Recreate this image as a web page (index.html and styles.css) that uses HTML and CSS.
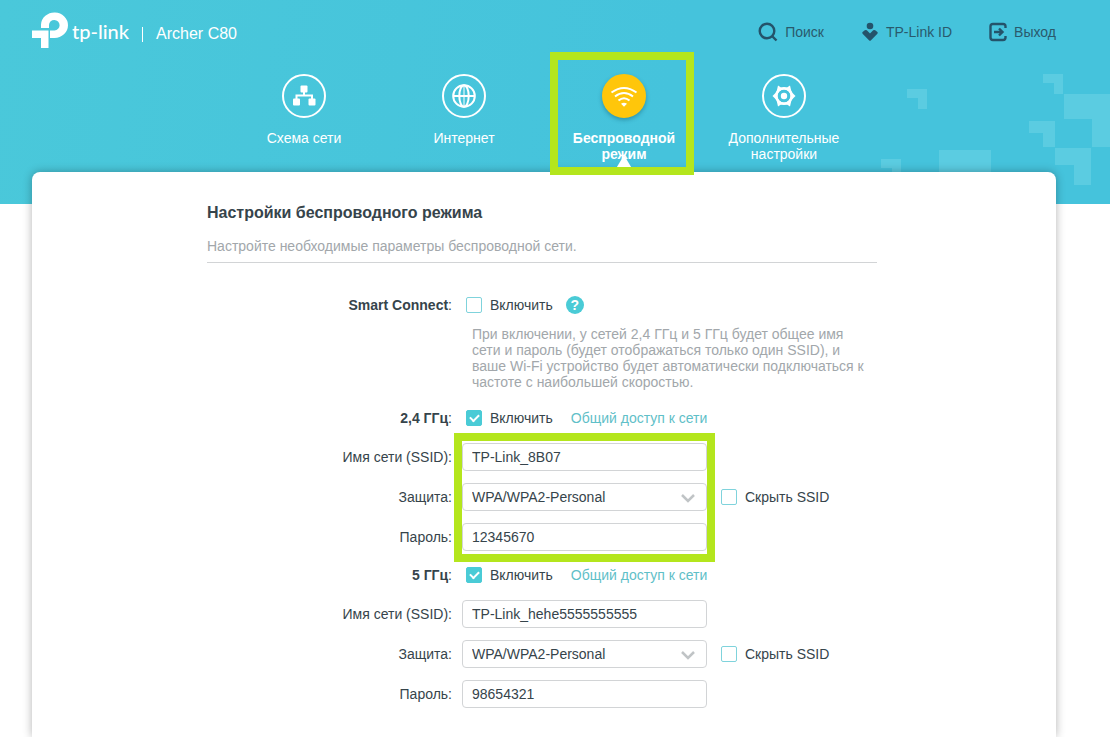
FILE: index.html
```html
<!DOCTYPE html>
<html lang="ru">
<head>
<meta charset="utf-8">
<title>Archer C80</title>
<link rel="stylesheet" href="styles.css">
</head>
<body>
<header class="header">
  <svg class="header-pattern" width="230" height="132" viewBox="0 0 230 132" aria-hidden="true">
    <path d="M27 17h20v20h-9v-11h-11zM163 2h20v20h-9v-11h-11zM184 22h46v53h-18v-28h-28zM149 49h26v26h-12v-14h-14zM175 76h36v37h-17v-20h-19zM59 78h52v54h-52zM1 87h20v20h-9v-11h-11z"/>
  </svg>
  <div class="topbar">
    <div class="brand">
      <svg class="brand-mark" width="36" height="36" viewBox="0 0 36 36" aria-hidden="true">
        <path d="M9 16V12.500A13.500 12.800 0 1 1 22.500 26H18V18.500H22.500A5.300 5.300 0 1 0 17 13V16z"/>
        <path d="M0 18.500h16.500V36H9V26H0z"/>
      </svg>
      <span class="brand-name">tp-link</span>
      <span class="brand-divider"></span>
      <span class="brand-model">Archer C80</span>
    </div>
    <div class="actions">
      <button class="action" type="button">
        <svg width="20" height="20" viewBox="0 0 20 20" aria-hidden="true"><circle cx="9" cy="9" r="7.300" class="line"/><path d="M14 14l4.500 4.500" class="line"/></svg>
        Поиск
      </button>
      <button class="action" type="button">
        <svg width="18" height="20" viewBox="0 0 18 20" aria-hidden="true"><circle cx="9" cy="4" r="3.300"/><path d="M9 11.600l3.200-3.300q1-.8 2 0l2.200 1.700q.8.900 0 1.700L10 18.300q-1 1-2 0L1.600 11.700q-.8-.8 0-1.700L3.800 8.300q1-.8 2 0z"/></svg>
        TP-Link ID
      </button>
      <button class="action" type="button">
        <svg width="18" height="20" viewBox="0 0 18 20" aria-hidden="true"><path d="M16.500 6V4.500q0-2.500-2.500-2.500H4Q1.500 2 1.500 4.500v11Q1.500 18 4 18h10q2.500 0 2.500-2.500V14M5 10h8M10 6.500l3.500 3.500-3.500 3.500" class="line"/></svg>
        Выход
      </button>
    </div>
  </div>
  <nav class="nav">
    <a class="nav-item" href="#map">
      <span class="nav-icon"><svg width="24" height="24" viewBox="0 0 24 24" aria-hidden="true"><rect x="8.500" y="1.500" width="7" height="7" rx="1"/><rect x="1" y="14.500" width="7" height="7" rx="1"/><rect x="16.500" y="14.500" width="7" height="7" rx="1"/><path d="M12 8v4M4.500 15.500v-4h15.500v4" class="line"/></svg></span>
      Схема сети
    </a>
    <a class="nav-item" href="#internet">
      <span class="nav-icon"><svg width="24" height="24" viewBox="0 0 24 24" aria-hidden="true"><g class="line"><circle cx="12" cy="12" r="10.800"/><ellipse cx="12" cy="12" rx="4.700" ry="10.800"/><path d="M1 12h22"/><path d="M12 1v22" class="thin"/></g></svg></span>
      Интернет
    </a>
    <a class="nav-item nav-item-active" href="#wireless">
      <span class="nav-icon"><svg width="28" height="24" viewBox="0 0 28 24" aria-hidden="true"><path d="M1.500 8.500q12.500-9 25 0M5 12.500q9-7 18 0M8.500 16.500q5.500-4.500 11 0" class="line"/><path d="M11 19.800q3-2.200 6 0l-3 3z"/></svg></span>
      Беспроводной режим
    </a>
    <a class="nav-item" href="#advanced">
      <span class="nav-icon"><svg width="24" height="24" viewBox="0 0 24 24" aria-hidden="true"><circle cx="12" cy="12" r="7.800" class="line thick"/><circle cx="12" cy="12" r="3.200"/><path d="M6 1.500l3 2h6l3-2 1.500 6.500 4 4-4 4-1.500 6.500-3-2H9l-3 2L4.500 16l-4-4 4-4zM12 5.500a6.500 6.500 0 1 0 0 13 6.500 6.500 0 1 0 0-13z" fill-rule="evenodd"/></svg></span>
      Дополнительные настройки
    </a>
  </nav>
</header>
<main class="panel">
  <form class="settings">
    <h1 class="title">Настройки беспроводного режима</h1>
    <p class="subtitle">Настройте необходимые параметры беспроводной сети.</p>

    <div class="row toggle-row">
      <span class="label"><b>Smart Connect</b>:</span>
      <div class="toggle">
        <label class="check"><input type="checkbox">Включить</label>
        <button class="help" type="button" aria-label="Справка">?</button>
      </div>
    </div>
    <p class="hint">При включении, у сетей 2,4 ГГц и 5 ГГц будет общее имя сети и пароль (будет отображаться только один SSID), и ваше Wi-Fi устройство будет автоматически подключаться к частоте с наибольшей скоростью.</p>

    <div class="band">
      <div class="row toggle-row">
        <span class="label"><b>2,4 ГГц</b>:</span>
        <div class="toggle">
          <label class="check"><input type="checkbox" checked>Включить</label>
          <a class="share" href="#share24">Общий доступ к сети</a>
        </div>
      </div>
      <div class="fields fields-marked">
        <div class="row">
          <label class="label" for="ssid24">Имя сети (SSID):</label>
          <input class="control" id="ssid24" type="text" value="TP-Link_8B07">
        </div>
        <div class="row">
          <label class="label" for="sec24">Защита:</label>
          <div class="select">
            <select class="control" id="sec24"><option>WPA/WPA2-Personal</option></select>
            <svg class="chevron" width="14" height="9" viewBox="0 0 14 9" aria-hidden="true"><path d="M1 1l6 6 6-6"/></svg>
          </div>
          <label class="check"><input type="checkbox">Скрыть SSID</label>
        </div>
        <div class="row">
          <label class="label" for="pass24">Пароль:</label>
          <input class="control" id="pass24" type="text" value="12345670">
        </div>
      </div>
    </div>

    <div class="band">
      <div class="row toggle-row">
        <span class="label"><b>5 ГГц</b>:</span>
        <div class="toggle">
          <label class="check"><input type="checkbox" checked>Включить</label>
          <a class="share" href="#share5">Общий доступ к сети</a>
        </div>
      </div>
      <div class="fields">
        <div class="row">
          <label class="label" for="ssid5">Имя сети (SSID):</label>
          <input class="control" id="ssid5" type="text" value="TP-Link_hehe5555555555">
        </div>
        <div class="row">
          <label class="label" for="sec5">Защита:</label>
          <div class="select">
            <select class="control" id="sec5"><option>WPA/WPA2-Personal</option></select>
            <svg class="chevron" width="14" height="9" viewBox="0 0 14 9" aria-hidden="true"><path d="M1 1l6 6 6-6"/></svg>
          </div>
          <label class="check"><input type="checkbox">Скрыть SSID</label>
        </div>
        <div class="row">
          <label class="label" for="pass5">Пароль:</label>
          <input class="control" id="pass5" type="text" value="98654321">
        </div>
      </div>
    </div>
  </form>
</main>
</body>
</html>
```

FILE: styles.css
```css
*, *::before, *::after { box-sizing: border-box; }

body {
  margin: 0;
  min-height: 100vh;
  display: flex;
  flex-direction: column;
  background: #fff;
  color: #36444b;
  font: 14px/16px "Liberation Sans", Arial, sans-serif;
}

button, input, select { font: inherit; color: inherit; }

.header {
  position: relative;
  min-height: 204px;
  background: linear-gradient(100deg, #4ac8da, #45c3dc 60%);
}

.header-pattern {
  position: absolute;
  right: 0;
  top: 72px;
  fill: #5bcce1;
}

.topbar {
  position: relative;
  display: flex;
  justify-content: space-between;
  align-items: center;
  height: 64px;
  padding: 0 54px 0 32px;
}

.brand { display: flex; align-items: center; color: #fff; }
.brand-mark { fill: #fff; margin-bottom: 4px; }
.brand-name { margin: 0 0 2px 4px; font: 500 20px/24px Lato, sans-serif; }
.brand-divider { width: 1px; height: 15px; margin: 5px 13px 0 13px; background: #fff; }
.brand-model { margin-top: 4px; font-size: 16px; }

.actions { display: flex; gap: 37px; }
.action {
  display: flex;
  align-items: center;
  gap: 7px;
  padding: 0;
  border: 0;
  background: none;
  color: #2a5a6c;
}
.action svg { fill: #24536a; }
.action .line { fill: none; stroke: #24536a; stroke-width: 2.4; }

.nav {
  position: relative;
  z-index: 2;
  display: flex;
  justify-content: center;
  padding: 10px 54px 0 32px;
}
.nav-item {
  position: relative;
  width: 160px;
  height: 98px;
  padding: 0 16px;
  display: flex;
  flex-direction: column;
  align-items: center;
  gap: 12px;
  color: #fff;
  text-align: center;
  text-decoration: none;
}
.nav-icon {
  flex: none;
  display: grid;
  place-items: center;
  width: 44px;
  height: 44px;
  border: 2px solid #fff;
  border-radius: 50%;
}
.nav-icon svg { fill: #fff; }
.nav-icon .line { fill: none; stroke: #fff; stroke-width: 2; }
.nav-icon .thin { stroke-width: 1; }
.nav-icon .thick { stroke-width: 2.5; }

.nav-item-active { font-weight: bold; }
.nav-item-active .nav-icon {
  border-color: #ffc60b;
  background: #ffc60b;
  box-shadow: 0 2px 4px rgba(0, 60, 80, 0.35);
}
.nav-item-active::before {
  content: "";
  position: absolute;
  bottom: 0;
  border: 10px solid transparent;
  border-top: 0;
  border-bottom: 17px solid #fff;
}
.nav-item-active::after {
  content: "";
  position: absolute;
  top: -22px;
  bottom: -3px;
  left: 6px;
  width: 144px;
  border: 8px solid #b4e61d;
}

.panel {
  position: relative;
  z-index: 1;
  flex: 1;
  margin: -32px 54px 0 32px;
  padding: 31px 175px 28px;
  border-radius: 8px 8px 0 0;
  background: #fff;
  box-shadow: 0 0 10px rgba(0, 0, 0, 0.3);
}

.settings { max-width: 670px; }

.title { margin: 0 0 15px; font-size: 16px; line-height: 20px; }
.subtitle {
  margin: 0 0 30px;
  padding-bottom: 8px;
  border-bottom: 1px solid #d2d4d6;
  color: #a2a7ab;
}

.row {
  display: grid;
  grid-template-columns: 245px 245px auto;
  column-gap: 10px;
  align-items: center;
}
.toggle-row { grid-template-columns: 245px auto; min-height: 24px; }
.label { text-align: right; }

.toggle { display: flex; align-items: center; }
.check { display: flex; align-items: center; gap: 8px; margin-left: 4px; }
.check input {
  appearance: none;
  display: grid;
  place-items: center;
  width: 16px;
  height: 16px;
  margin: 0;
  border: 1px solid #7fd3dc;
  border-radius: 2px;
  background: #fff;
}
.check input:checked { background: #4acbd6; border-color: #4acbd6; }
.check input:checked::before {
  content: "";
  width: 9px;
  height: 6px;
  margin-bottom: 3px;
  border: solid #fff;
  border-width: 0 0 2px 2px;
  transform: rotate(-45deg);
}

.help {
  width: 18px;
  height: 18px;
  margin-left: 13px;
  padding: 0;
  border: 0;
  border-radius: 50%;
  background: #4acbd6;
  color: #fff;
  font-weight: bold;
}
.share { margin-left: 18px; color: #5fc0c8; text-decoration: none; }

.hint { margin: 9px 0 16px 265px; max-width: 400px; color: #a2a7ab; }

.band + .band { margin-top: 12px; }
.fields {
  position: relative;
  display: grid;
  gap: 12px;
  margin-top: 13px;
}
.control {
  display: block;
  width: 100%;
  height: 28px;
  padding: 0 9px;
  border: 1px solid #d2d4d6;
  border-radius: 4px;
  background: #fff;
}
.select { position: relative; }
.select .control { appearance: none; }
.chevron {
  position: absolute;
  right: 12px;
  top: 11px;
  pointer-events: none;
  fill: none;
  stroke: #c0c4c6;
  stroke-width: 2.5;
}

.fields-marked::after {
  content: "";
  position: absolute;
  top: -10px;
  bottom: -11px;
  left: 247px;
  width: 261px;
  border: 8px solid #b4e61d;
  pointer-events: none;
}
```
